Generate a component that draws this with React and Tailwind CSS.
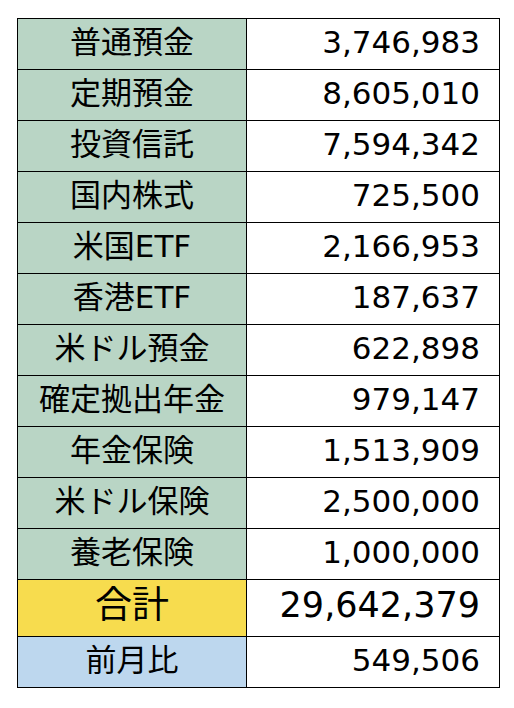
import React from "react";

const rows = [
  ["普通預金", "3,746,983"],
  ["定期預金", "8,605,010"],
  ["投資信託", "7,594,342"],
  ["国内株式", "725,500"],
  ["米国ETF", "2,166,953"],
  ["香港ETF", "187,637"],
  ["米ドル預金", "622,898"],
  ["確定拠出年金", "979,147"],
  ["年金保険", "1,513,909"],
  ["米ドル保険", "2,500,000"],
  ["養老保険", "1,000,000"],
];

const font = { fontFamily: '"DejaVu Sans", "Noto Sans CJK JP", sans-serif' };

export default function App() {
  return (
    <div className="w-[514px] h-[708px] bg-white pt-[18px] pl-[17px]" style={font}>
      <table className="border-collapse text-black">
        <tbody>
          {rows.map(([label, value]) => (
            <tr key={label} className="h-[51px]">
              <td className="w-[229px] border border-black bg-[#b9d5c5] text-center text-[31px] leading-none p-0 pb-[4px]">
                {label}
              </td>
              <td className="w-[253px] border border-black bg-white text-right text-[31px] leading-none p-0 pb-[4px] pr-[19px]">
                {value}
              </td>
            </tr>
          ))}
          <tr className="h-[57px]">
            <td className="w-[229px] border border-black bg-[#f7dc4e] text-center text-[37px] leading-none p-0 pb-[6px]">
              合計
            </td>
            <td className="w-[253px] border border-black bg-white text-right text-[35px] leading-none p-0 pb-[5px] pr-[19px]">
              29,642,379
            </td>
          </tr>
          <tr className="h-[51px]">
            <td className="w-[229px] border border-black bg-[#bdd7ee] text-center text-[31px] leading-none p-0 pb-[4px]">
              前月比
            </td>
            <td className="w-[253px] border border-black bg-white text-right text-[31px] leading-none p-0 pb-[4px] pr-[19px]">
              549,506
            </td>
          </tr>
        </tbody>
      </table>
    </div>
  );
}
